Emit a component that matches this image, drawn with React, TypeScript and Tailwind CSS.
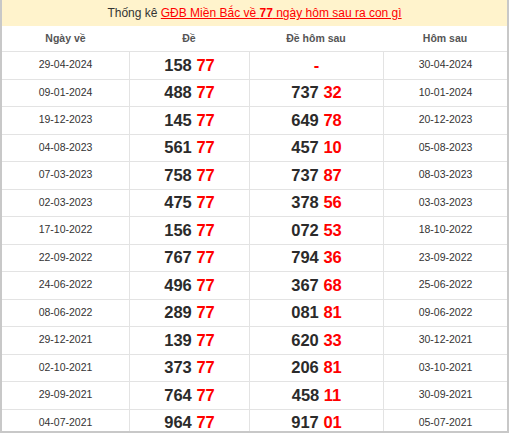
const rows: [string, string, string | null, string][] = [
  ["29-04-2024", "158", null, "30-04-2024"],
  ["09-01-2024", "488", "737 32", "10-01-2024"],
  ["19-12-2023", "145", "649 78", "20-12-2023"],
  ["04-08-2023", "561", "457 10", "05-08-2023"],
  ["07-03-2023", "758", "737 87", "08-03-2023"],
  ["02-03-2023", "475", "378 56", "03-03-2023"],
  ["17-10-2022", "156", "072 53", "18-10-2022"],
  ["22-09-2022", "767", "794 36", "23-09-2022"],
  ["24-06-2022", "496", "367 68", "25-06-2022"],
  ["08-06-2022", "289", "081 81", "09-06-2022"],
  ["29-12-2021", "139", "620 33", "30-12-2021"],
  ["02-10-2021", "373", "206 81", "03-10-2021"],
  ["29-09-2021", "764", "458 11", "30-09-2021"],
  ["04-07-2021", "964", "917 01", "05-07-2021"],
];

function Lo({ head, tail }: { head: string; tail: string }) {
  return (
    <span className="text-[16.5px] font-bold">
      <span className="text-[#2b2b2b]">{head}</span>{" "}
      <span className="text-[#ff0000]">{tail}</span>
    </span>
  );
}

const cols = "grid grid-cols-[127px_120px_134px_1fr]";

export default function App() {
  return (
    <div className="h-[433px] w-[509px] overflow-hidden bg-white font-['Liberation_Sans',Arial,sans-serif]">
      <div className="flex h-full flex-col border-x-2 border-b-2 border-[#c8c8c8] overflow-hidden">
        <div className="flex h-[26px] shrink-0 items-center justify-center bg-[#fff3cc] text-[12px] text-[#333]">
          <span>
            Thống kê{" "}
            <a href="#" className="text-[#ff0000] underline">
              GĐB Miền Bắc về <b>77</b> ngày hôm sau ra con gì
            </a>
          </span>
        </div>

        <div className={`${cols} h-[25px] shrink-0 items-center text-center text-[10.5px] font-bold text-[#555]`}>
          <div>Ngày về</div>
          <div>Đề</div>
          <div>Đề hôm sau</div>
          <div>Hôm sau</div>
        </div>

        {rows.map(([day, de, next, nextDay]) => {
          const [nh, nt] = next ? next.split(" ") : ["", ""];
          return (
            <div
              key={day}
              className={`${cols} h-[27.5px] shrink-0 border-t border-[#e3e3e3] text-center`}
            >
              <div className="flex items-center justify-center text-[10.5px] text-[#333]">{day}</div>
              <div className="flex items-center justify-center border-l border-[#e3e3e3]">
                <Lo head={de} tail="77" />
              </div>
              <div className="flex items-center justify-center border-l border-[#e3e3e3]">
                {next ? (
                  <Lo head={nh} tail={nt} />
                ) : (
                  <span className="text-[16.5px] font-bold text-[#ff0000]">-</span>
                )}
              </div>
              <div className="flex items-center justify-center border-l border-[#e3e3e3] text-[10.5px] text-[#333]">
                {nextDay}
              </div>
            </div>
          );
        })}
      </div>
    </div>
  );
}
